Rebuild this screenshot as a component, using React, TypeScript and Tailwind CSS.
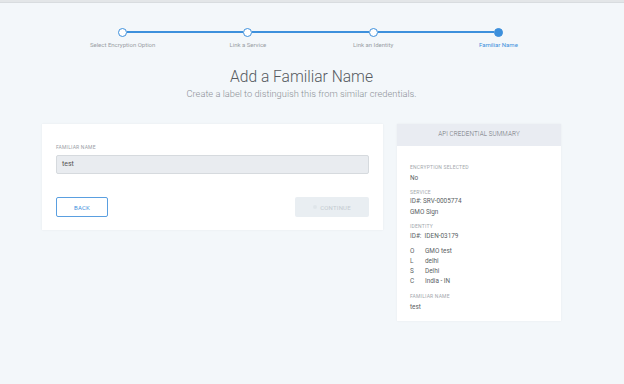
import React from 'react';

const steps = ['Select Encryption Option', 'Link a Service', 'Link an Identity', 'Familiar Name'];

function Stepper() {
  return (
    <div className="ml-[60px] w-[501px] grid grid-cols-4">
      {steps.map((s, i) => {
        const last = i === steps.length - 1;
        return (
          <div key={s} className="flex flex-col items-center">
            <div className="flex items-center w-full h-[10px]">
              <div className={`flex-1 h-[2px] ${i === 0 ? 'bg-transparent' : 'bg-[#3d90dc]'}`} />
              <div
                className={`w-[9px] h-[9px] rounded-full border-[1.5px] border-[#3d90dc] ${
                  last ? 'bg-[#3d90dc]' : 'bg-white'
                }`}
              />
              <div className={`flex-1 h-[2px] ${last ? 'bg-transparent' : 'bg-[#3d90dc]'}`} />
            </div>
            <div className={`mt-[4px] text-[6px] leading-[8px] ${last ? 'text-[#3d90dc]' : 'text-[#9a9fa5]'}`}>{s}</div>
          </div>
        );
      })}
    </div>
  );
}

function Field({ label, children }: { label: string; children: React.ReactNode }) {
  return (
    <div>
      <div className="text-[5px] leading-[7px] tracking-[0.2px] text-[#a3a8ad] uppercase">{label}</div>
      {children}
    </div>
  );
}

export default function App() {
  return (
    <div
      className="w-[624px] h-[384px] bg-[#f3f7fa] overflow-hidden"
      style={{ fontFamily: 'Roboto, "Noto Sans", sans-serif' }}
    >
      <div className="h-[3px] bg-[#e3e6e8] border-b border-[#d8dcdf]" />

      <div className="pt-[24px]">
        <Stepper />
      </div>

      {/* Heading */}
      <div className="w-[519px] ml-[42px] text-center mt-[18px]">
        <h1 className="text-[15.6px] leading-[20px] font-light text-[#555a60]">Add a Familiar Name</h1>
        <p className="text-[9.3px] leading-[13px] text-[#8c9197] font-light mt-[0px]">
          Create a label to distinguish this from similar credentials.
        </p>
      </div>

      <div className="flex items-start gap-[14px] pl-[42px] mt-[24px]">
        {/* Form card */}
        <div className="w-[341px] bg-white shadow-[0_0_2px_rgba(0,0,0,0.06)] px-[14px] pt-[20px] pb-[13px]">
          <div className="text-[5px] leading-[7px] tracking-[0.2px] text-[#9aa0a6] uppercase">Familiar Name</div>
          <div className="mt-[4px] h-[19px] bg-[#e9ecf0] border border-[#d6dade] rounded-[2px] flex items-center px-[5px] text-[7px] text-[#555]">
            test
          </div>
          <div className="flex justify-between mt-[23px]">
            <button className="w-[52px] h-[20px] border border-[#5a9fe0] rounded-[2px] text-[6px] text-[#3d90dc] tracking-[0.2px] bg-white">
              BACK
            </button>
            <button className="w-[74px] h-[20px] bg-[#e9eef2] rounded-[2px] text-[6px] text-[#c4cbd1] tracking-[0.2px] flex items-center justify-center gap-[3px]">
              <span className="w-[4px] h-[4px] rounded-full bg-[#dfe5ea]" />
              CONTINUE
            </button>
          </div>
        </div>

        {/* Summary card */}
        <div className="w-[164px] bg-white shadow-[0_0_2px_rgba(0,0,0,0.06)]">
          <div className="h-[22px] bg-[#e9ecf2] flex items-center justify-center text-[6.3px] text-[#70757a] font-light tracking-[0.1px]">
            API CREDENTIAL SUMMARY
          </div>
          <div className="px-[13px] pt-[18px] pb-[8px] text-[6.4px] leading-[10.5px] text-[#5a5f65] flex flex-col gap-[5px]">
            <Field label="Encryption Selected">
              <div className="mt-[2px]">No</div>
            </Field>
            <Field label="Service">
              <div>ID#: SRV-0005774</div>
              <div className="mt-[1px]">GMO Sign</div>
            </Field>
            <Field label="Identity">
              <div className="mt-[1px]">ID#:&nbsp; IDEN-03179</div>
              <div className="mt-[5px] grid grid-cols-[15px_1fr] leading-[10px]">
                <span>O</span><span>GMO test</span>
                <span>L</span><span>delhi</span>
                <span>S</span><span>Delhi</span>
                <span>C</span><span>India - IN</span>
              </div>
            </Field>
            <div className="mt-[2px]">
              <Field label="Familiar Name">
                <div className="mt-[2px]">test</div>
              </Field>
            </div>
          </div>
        </div>
      </div>
    </div>
  );
}
